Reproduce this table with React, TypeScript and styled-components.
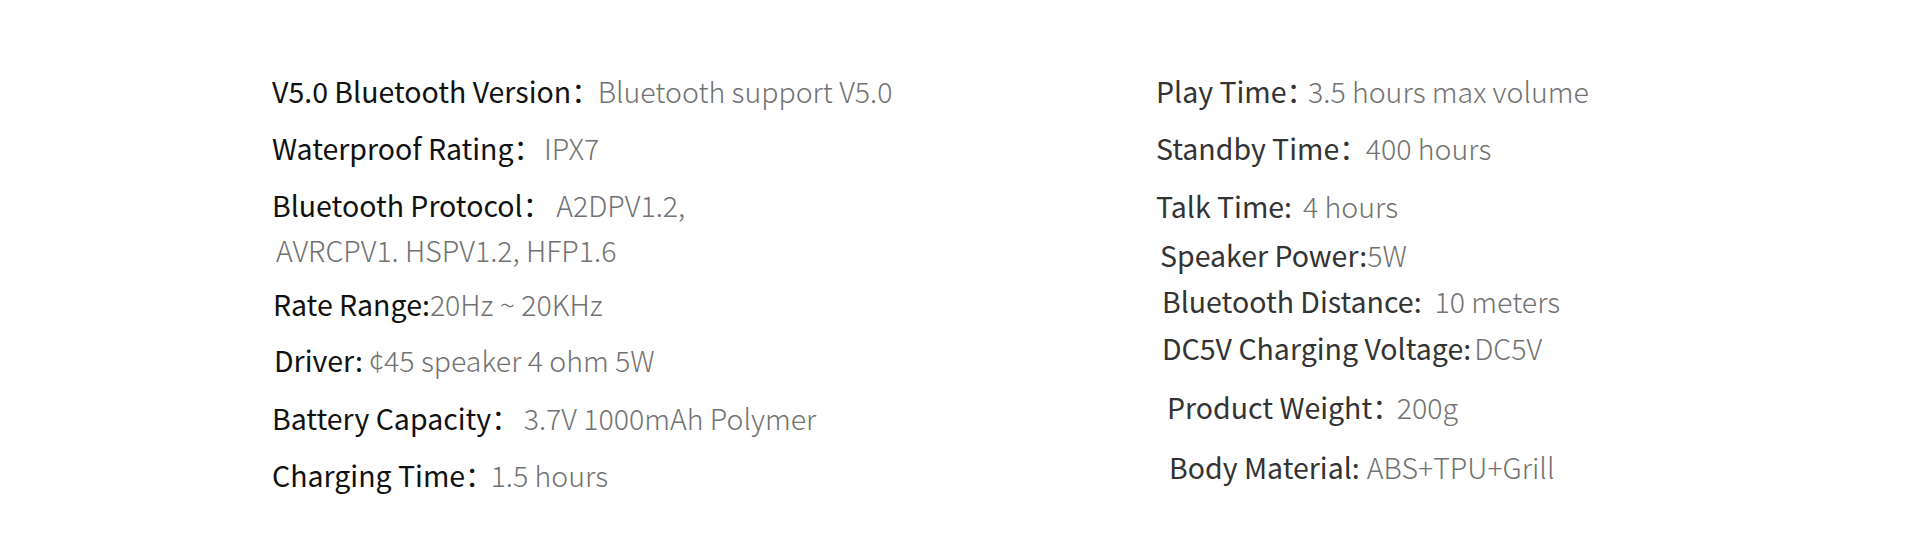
import * as React from "react";
import styled, { createGlobalStyle } from "styled-components";

const GlobalStyle = createGlobalStyle`
  html, body {
    margin: 0;
    padding: 0;
    background: #ffffff;
  }
`;

const Page = styled.div`
  width: 1920px;
  height: 557px;
  box-sizing: border-box;
  padding: 70px 0 0 272px;
  display: flex;
  background: #ffffff;
  font-family: "Noto Sans CJK SC", "Noto Sans", sans-serif;
`;

const Column = styled.div<{ $width?: number }>`
  display: flex;
  flex-direction: column;
  width: ${(p) => (p.$width ? `${p.$width}px` : "auto")};
`;

const Row = styled.div<{ $top: number; $indent?: number }>`
  display: flex;
  align-items: center;
  height: 40px;
  margin-top: ${(p) => p.$top}px;
  padding-left: ${(p) => p.$indent || 0}px;
  font-size: 28.5px;
  white-space: nowrap;
`;

const Label = styled.span<{ $dark?: boolean }>`
  color: ${(p) => (p.$dark ? "#111111" : "#333333")};
  font-weight: 400;
`;

const Value = styled.span<{ $gap?: number }>`
  color: #727272;
  font-weight: 300;
  margin-left: ${(p) => p.$gap || 0}px;
`;

interface Spec {
  label: string;
  value: string;
  top: number;
  indent?: number;
  gap?: number;
}

const leftSpecs: Spec[] = [
  { label: "V5.0 Bluetooth Version：", value: "Bluetooth support V5.0", top: 0, gap: -2 },
  { label: "Waterproof Rating：", value: "IPX7", top: 17, gap: 2 },
  { label: "Bluetooth Protocol：", value: "A2DPV1.2,", top: 17, gap: 5 },
  { label: "", value: "AVRCPV1. HSPV1.2, HFP1.6", top: 5, indent: 4 },
  { label: "Rate Range:", value: "20Hz ~ 20KHz", top: 14, indent: 1 },
  { label: "Driver:", value: "¢45 speaker 4 ohm 5W", top: 16, indent: 2, gap: 6 },
  { label: "Battery Capacity：", value: "3.7V 1000mAh Polymer", top: 18, gap: 4 },
  { label: "Charging Time：", value: "1.5 hours", top: 17, gap: -3 },
];

const rightSpecs: Spec[] = [
  { label: "Play Time：", value: "3.5 hours max volume", top: 0, gap: -7 },
  { label: "Standby Time：", value: "400 hours", top: 17, gap: -2 },
  { label: "Talk Time:", value: "4 hours", top: 18, gap: 11 },
  { label: "Speaker Power:", value: "5W", top: 9, indent: 4 },
  { label: "Bluetooth Distance:", value: "10 meters", top: 6, indent: 6, gap: 13 },
  { label: "DC5V Charging Voltage:", value: "DC5V", top: 7, indent: 6, gap: 3 },
  { label: "Product Weight：", value: "200g", top: 19, indent: 11, gap: -4 },
  { label: "Body Material:", value: "ABS+TPU+Grill", top: 20, indent: 13, gap: 7 },
];

export default function App() {
  return (
    <>
      <GlobalStyle />
      <Page>
        <Column $width={884}>
          {leftSpecs.map((s, i) => (
            <Row key={i} $top={s.top} $indent={s.indent}>
              {s.label && <Label $dark>{s.label}</Label>}
              <Value $gap={s.gap}>{s.value}</Value>
            </Row>
          ))}
        </Column>
        <Column>
          {rightSpecs.map((s, i) => (
            <Row key={i} $top={s.top} $indent={s.indent}>
              <Label>{s.label}</Label>
              <Value $gap={s.gap}>{s.value}</Value>
            </Row>
          ))}
        </Column>
      </Page>
    </>
  );
}
